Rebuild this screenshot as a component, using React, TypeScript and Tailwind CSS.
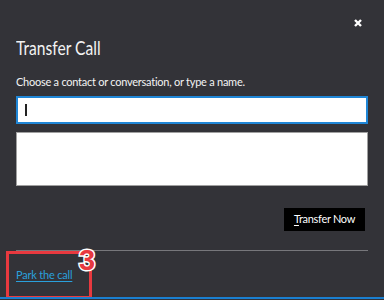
export default function App() {
  return (
    <div
      className="relative h-[300px] w-[384px] overflow-hidden bg-[#333338]"
      style={{ fontFamily: 'Lato, "Open Sans", sans-serif' }}
    >
      <div className="flex h-[36px] justify-end pr-[22px] pt-[19px]">
        <svg width="8" height="8" viewBox="0 0 8 8">
          <path d="M1 1 L7 7 M7 1 L1 7" stroke="#ffffff" strokeWidth="2.4" />
        </svg>
      </div>

      <div className="px-4">
        <h1 className="h-[24px] origin-left scale-x-[0.8] whitespace-nowrap text-[19.5px] leading-[24px] text-[#f2f2f2]">
          Transfer Call
        </h1>
        <p className="mt-[14px] text-[11px] leading-[16px] tracking-[-0.25px] text-[#f4f4f4]">
          Choose a contact or conversation, or type a name.
        </p>

        <div className="mt-[6px] flex h-[28px] items-center border-2 border-[#1f86d6] bg-white pl-[7px]">
          <span className="h-[12px] w-[1.5px] bg-[#222]" />
        </div>
        <div className="mt-[8px] h-[54px] border border-[#a0a0a0] bg-white" />

        <div className="mt-[22px] flex justify-end pr-[3px]">
          <button className="h-[23px] w-[81px] bg-black text-[11px] tracking-[-0.3px] text-white">
            <span className="underline underline-offset-2">T</span>ransfer Now
          </button>
        </div>

        <div className="mt-[19px] h-px bg-[#77777b]" />
      </div>

      <div className="mt-[14px] px-4 leading-[16px]">
        <a className="text-[11px] tracking-[-0.2px] text-[#2aa0dc] underline underline-offset-2">Park the call</a>
      </div>

      {/* annotation overlay */}
      <div className="absolute left-[6px] top-[251px] h-[48px] w-[86px] border-[3px] border-[#e8393f]" />
      <span
        className="absolute left-[79px] top-[243px] text-[29px] font-black leading-[34px] text-[#e8393f]"
        style={{ WebkitTextStroke: '3px white', paintOrder: 'stroke fill', fontFamily: '"Liberation Sans", sans-serif' }}
      >
        3
      </span>
      <div className="absolute bottom-[1px] left-0 h-[2px] w-full bg-[#1a7fd0]" />
    </div>
  );
}
